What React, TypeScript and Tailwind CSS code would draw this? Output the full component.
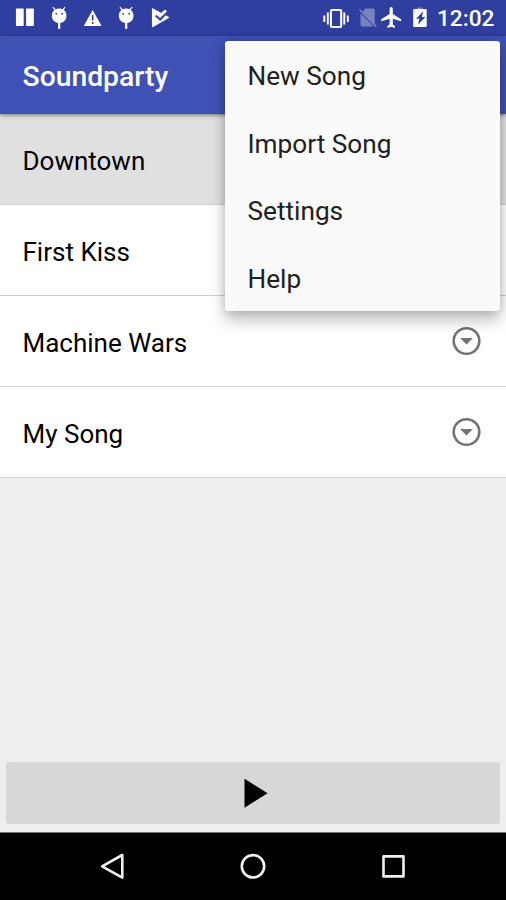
import type { ReactNode } from 'react'

const songs = ['Downtown', 'First Kiss', 'Machine Wars', 'My Song']
const menuItems = ['New Song', 'Import Song', 'Settings', 'Help']

function BugIcon() {
  return (
    <svg viewBox="0 0 34 36" className="h-[36px] w-[33.75px]" fill="none">
      <path d="M11 7l2.5 3M23.3 7l-2.5 3" stroke="white" strokeWidth="1.2" />
      <rect x="10" y="8.5" width="14.6" height="14.5" rx="6.8" fill="white" />
      <path d="M17.3 22v7" stroke="white" strokeWidth="2.2" />
      <circle cx="14.3" cy="13.7" r="0.9" fill="#303f9f" />
      <circle cx="20.3" cy="13.7" r="0.9" fill="#303f9f" />
    </svg>
  )
}

function StatusBar() {
  return (
    <div className="flex h-[36px] justify-between bg-[#303f9f] pl-2 pr-3">
      <div className="flex">
        <svg viewBox="0 0 34 36" className="h-[36px] w-[33.75px]" fill="white">
          <path d="M8 8.5h7.8v17.5h-7.8zM18.2 8.5h7.8v17.5h-7.8z" />
        </svg>
        <BugIcon />
        <svg viewBox="0 0 34 36" className="h-[36px] w-[33.75px]">
          <path d="M16.8 10l9 16h-18z" fill="white" />
          <path d="M16.8 15v5.5M16.8 22v2" stroke="#303f9f" strokeWidth="1.6" />
        </svg>
        <BugIcon />
        <svg viewBox="0 0 34 36" className="h-[36px] w-[33.75px]" fill="none">
          <path d="M9 9q0-1.2 1.2-.6l15.8 8.6q.6.5 0 1L10.2 27q-1.2.6-1.2-.6z" fill="white" />
          <path d="M12.8 15.4l4.5 4.1 6.5-6.8" stroke="#303f9f" strokeWidth="2" />
          <path d="M18 13.2l4.2-3.8 1.9 1.7-4 4.2z" fill="white" />
        </svg>
      </div>
      <div className="flex">
        <svg viewBox="0 0 34 36" className="h-[36px] w-[34px]" fill="none" stroke="white">
          <rect x="10.9" y="10" width="10.3" height="17" rx="1" strokeWidth="2.1" />
          <path d="M7.8 12.5v12M24.3 12.5v12" strokeWidth="1.9" />
          <path d="M4.3 15.5v6.5M27.8 15.5v6.5" strokeWidth="1.9" />
        </svg>
        <svg viewBox="-0.5 0 25 36" className="h-[36px] w-[25px]">
          <path d="M11 8.5h8q1.2 0 1.2 1.2v14.2L7.9 11.4zM6 13l13 13.5H8q-2 0-2-2z" fill="white" fillOpacity="0.35" />
          <path d="M5 9.5l17 17.5" stroke="white" strokeOpacity="0.4" strokeWidth="1.4" />
        </svg>
        <svg viewBox="0 0 24 36" className="h-[36px] w-[24px]" fill="white">
          <path d="M22.1 21.3v-2.1l-8.3-5.3V8.7a1.6 1.8 0 0 0-3.2 0v5.2l-8.3 5.3v2.1l8.3-2.6v5.8l-2.2 1.6V28l3.8-1.2L16 28v-1.9l-2.2-1.6v-5.8z" />
        </svg>
        <svg viewBox="-2 0 34 36" className="h-[36px] w-[34px]">
          <path d="M12.5 7.5h5v3h-5z" fill="white" fillOpacity="0.4" />
          <rect x="8.2" y="9" width="13.5" height="18" rx="1" fill="white" />
          <path d="M18.2 11.3l-7.2 7.5h3.4l-1.4 6 7.4-7.8h-3.5z" fill="#303f9f" />
        </svg>
        <span className="w-[57px] whitespace-nowrap pt-[6px] text-[22.6px] font-medium leading-[26px] text-white">12:02</span>
      </div>
    </div>
  )
}

function ExpandIcon() {
  return (
    <svg viewBox="0.5 0 30 30" className="h-[30px] w-[30px]">
      <circle cx="15" cy="15" r="12.8" fill="none" stroke="#737373" strokeWidth="2.6" />
      <path d="M8.6 12h12.8L15 18.5z" fill="#737373" />
    </svg>
  )
}

function SongRow({ name, selected }: { name: string; selected: boolean }) {
  return (
    <li
      className={`flex h-[91px] items-center justify-between border-b border-[#d0d0d0] pl-[22.5px] pr-[24.5px] ${selected ? 'bg-[#e0e0e0]' : 'bg-white'}`}
    >
      <span className="pt-[4px] text-[26px] leading-[30px] text-black">{name}</span>
      <ExpandIcon />
    </li>
  )
}

function NavButton({ children }: { children: ReactNode }) {
  return (
    <button className="flex w-[140.5px] justify-center">
      <svg viewBox="0 0 30 30" className="h-[30px] w-[30px]" fill="none" stroke="#f0f0f0" strokeWidth="2.6" strokeLinejoin="round">
        {children}
      </svg>
    </button>
  )
}

export default function App() {
  return (
    <div className="relative flex h-[900px] w-[506px] flex-col overflow-hidden bg-[#eeeeee] font-[Roboto,sans-serif]">
      <StatusBar />
      <header className="relative z-10 flex h-[78px] items-center bg-[#3f51b5] pl-[22.5px] shadow-[0_1px_4px_rgba(0,0,0,0.5)]">
        <h1 className="pt-[3px] text-[28.3px] font-medium leading-[34px] text-white">Soundparty</h1>
      </header>

      <ul className="flex-1">
        {songs.map((name, i) => (
          <SongRow key={name} name={name} selected={i === 0} />
        ))}
      </ul>

      {/* Playback */}
      <div className="px-[6px] pb-2">
        <button className="flex h-[62px] w-full items-center justify-center rounded-[3px] bg-[#d6d8d7]">
          <svg viewBox="0 0 30 30" className="h-[30px] w-[30px]">
            <path d="M6.5.8v29L29.6 15.3z" fill="black" />
          </svg>
        </button>
      </div>

      {/* System navigation */}
      <nav className="flex h-[68px] items-center justify-center border-t border-[#777777] bg-black pb-[2px]">
        <NavButton>
          <path d="M24.3 4v22.6L4.1 15.3z" />
        </NavButton>
        <NavButton>
          <circle cx="15" cy="15.3" r="11.2" />
        </NavButton>
        <NavButton>
          <rect x="4.5" y="5.4" width="20" height="20" />
        </NavButton>
      </nav>

      {/* Overflow menu */}
      <div className="absolute left-[225px] top-[41px] z-20 w-[275px] rounded-[3px] bg-[#fafafa] shadow-[0_9px_16px_rgba(0,0,0,0.26),0_0_8px_rgba(0,0,0,0.14)]">
        {menuItems.map((item) => (
          <div key={item} className="flex h-[67.5px] items-center pl-[22.5px] pt-[3px] text-[26.2px] leading-[30px] text-[#212121]">
            {item}
          </div>
        ))}
      </div>
    </div>
  )
}
